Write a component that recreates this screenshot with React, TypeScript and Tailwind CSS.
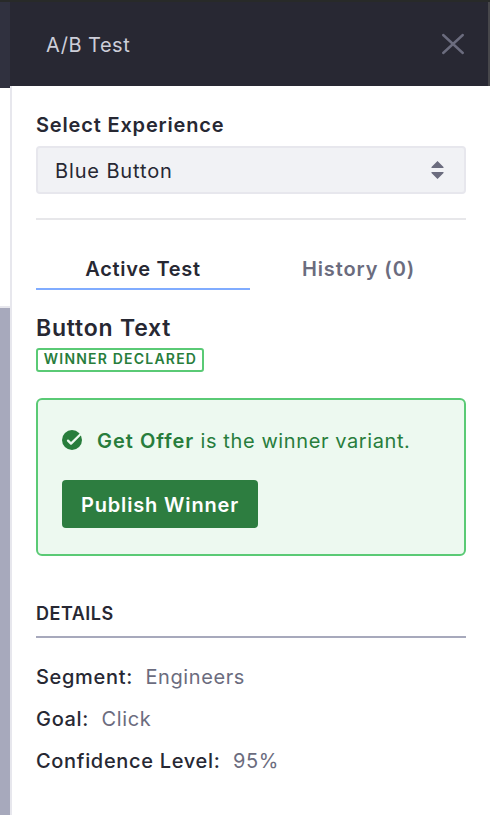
import React from "react";

function Header() {
  return (
    <header className="flex h-[84px] w-[478px] items-center justify-between bg-[#282833] pl-9 pr-[23px]">
      <h1 className="pt-0.5 text-[20px] leading-7 tracking-[0.5px] text-[#cdced9]">A/B Test</h1>
      <button aria-label="Close" className="block">
        <svg width="24" height="24" viewBox="0 0 24 24" fill="none" stroke="#6b6c7e" strokeWidth="2.4" strokeLinecap="round">
          <path d="M2.2 3 21.8 21M21.8 3 2.2 21" />
        </svg>
      </button>
    </header>
  );
}

function Detail({ label, value }: { label: string; value: string }) {
  return (
    <div className="flex h-[42px] items-center gap-[12.5px] text-[20px]">
      <dt className="font-medium tracking-[0.68px] text-[#272833]">{label}</dt>
      <dd className="tracking-[0.6px] text-[#6b6c7e]">{value}</dd>
    </div>
  );
}

export default function App() {
  return (
    <div className="flex h-[815px] w-[490px] overflow-hidden whitespace-nowrap bg-white font-['Inter',sans-serif] text-[#272833]">
      <div className="flex w-[10px] shrink-0 flex-col">
        <div className="h-[88px] border-t-2 border-[#282a29] bg-[#30313f]" />
        <div className="h-[220px] border-b-2 border-[#e7e7ed] bg-white" />
        <div className="flex-1 bg-[#a7a9bc]" />
      </div>
      <aside className="flex w-[480px] flex-col">
        <div className="h-[86px] border-t-2 border-[#282a29] bg-[#47474b]">
          <Header />
        </div>
        <div className="flex-1 border-l-2 border-[#e7e7ed] pl-6 pr-6">
          <label className="flex h-[60px] items-center pt-[18px] text-[20px] font-semibold tracking-[0.83px]">Select Experience</label>
          <div className="flex h-12 w-[430px] items-center justify-between rounded-[4px] border-2 border-[#e7e7ed] bg-[#f1f2f5] pl-[17px] pr-[20px] text-[20px] tracking-[0.87px]">
            <span className="pt-px">Blue Button</span>
            <svg width="13" height="20" viewBox="0 0 13 20" fill="#6b6c7e">
              <path d="M.5 7 6.5 1l6 6v1H.5zM.5 12h12v1l-6 6-6-6z" />
            </svg>
          </div>
          <div className="mt-6 h-[2px] w-[430px] bg-[#e7e7ea]" />
          <div className="mt-[28px] flex h-[42px] w-[430px] text-[20px]">
            <div className="flex w-[214px] justify-center border-b-2 border-[#80acff] pt-[7px] font-semibold leading-7 tracking-[0.68px]">Active Test</div>
            <div className="flex w-[216px] justify-center pl-px pt-[7px] font-semibold leading-7 tracking-[0.9px] text-[#6b6c7e]">History (0)</div>
          </div>
          <h2 className="mt-[22px] text-[23px] font-semibold leading-8 tracking-[0.8px]">Button Text</h2>
          <div className="mt-1 flex h-6 w-[168px] items-center justify-center rounded-[3px] border-2 border-[#5aca75] pb-[3px] pl-px text-[14px] font-semibold tracking-[1.2px] text-[#287d3c]">WINNER DECLARED</div>
          <section className="mt-[26px] h-[158px] w-[430px] rounded-[6px] border-2 border-[#5aca75] bg-[#edf9f0] px-6 pt-6 text-[#287d3c]">
            <div className="flex h-[32px] items-center text-[20px]">
              <svg className="mr-[15px]" width="20" height="20" viewBox="0 0 20 20">
                <circle cx="10" cy="10" r="10" fill="#287d3c" />
                <path d="m6 10.6 3 3L18 4.8" fill="none" stroke="#edf9f0" strokeWidth="2.3" strokeLinecap="round" strokeLinejoin="round" />
              </svg>
              <p className="pt-px tracking-[0.6px]"><strong className="font-semibold tracking-[1px]">Get Offer</strong> is the winner variant.</p>
            </div>
            <button className="mt-6 flex h-12 w-[196px] items-center justify-center rounded-[4px] bg-[#2d7d40] pt-px text-[20px] font-semibold tracking-[0.85px] text-white">Publish Winner</button>
          </section>
          <h3 className="mt-[44px] h-[38px] w-[430px] border-b-2 border-[#a7a9bc] text-[18px] font-semibold leading-7 tracking-[0.5px]">DETAILS</h3>
          <dl className="mt-[18px]">
            <Detail label="Segment:" value="Engineers" />
            <Detail label="Goal:" value="Click" />
            <Detail label="Confidence Level:" value="95%" />
          </dl>
        </div>
      </aside>
    </div>
  );
}
